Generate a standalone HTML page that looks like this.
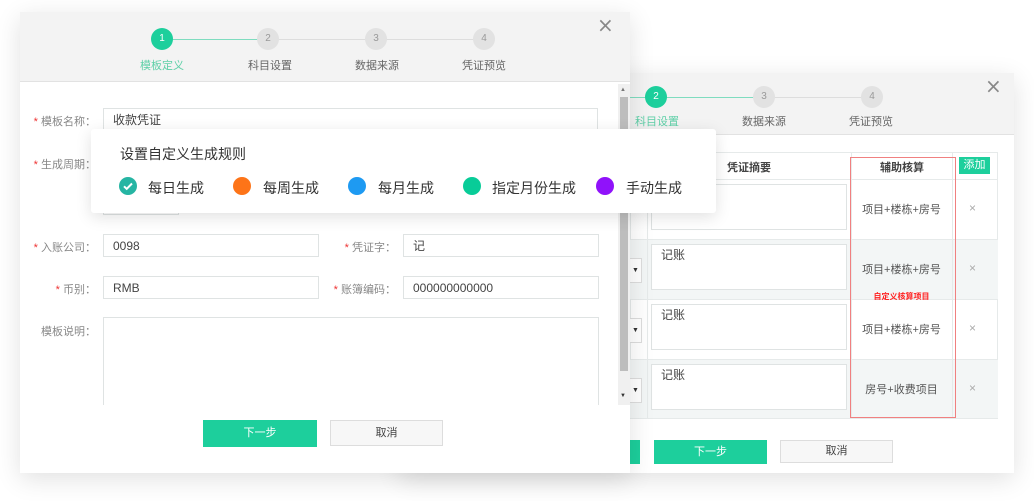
<!DOCTYPE html>
<html><head><meta charset="utf-8"><style>
*{box-sizing:border-box;margin:0;padding:0}
body{width:1034px;height:501px;background:#fff;position:relative;overflow:hidden;font-family:"Liberation Sans","Noto Sans CJK SC",sans-serif;color:#555;font-size:12px}
.abs{position:absolute}
.dlg{position:absolute;background:#fff;box-shadow:0 6px 24px rgba(0,0,0,.12)}
.hdr{position:absolute;left:0;right:0;top:0;background:#f3f3f3;border-bottom:1px solid #e2e2e2}
.c{position:absolute;width:22px;height:22px;border-radius:50%;background:#e2e2e2;color:#999;font-size:10px;text-align:center;line-height:22px}
.c.on{background:#1dcf9c;color:#fff}
.ln{position:absolute;height:1px;background:#ddd}
.sl{position:absolute;font-size:11px;color:#666;transform:translateX(-50%);white-space:nowrap}
.inp{position:absolute;border:1px solid #dfe3e3;background:#fff;font-size:12px;color:#444;padding-left:9px;line-height:22px}
.lbl{position:absolute;font-size:11px;color:#888;text-align:right;white-space:nowrap}
.lbl b{color:#e33;font-weight:normal}
.btn{position:absolute;text-align:center;font-size:11px}
.x{position:absolute;font-size:20px;color:#888;font-family:"DejaVu Sans",sans-serif}
.dot{position:absolute;width:18px;height:18px;border-radius:50%}
.op{position:absolute;font-size:14px;color:#333;top:178px}
</style></head><body>

<div class="dlg" style="left:400px;top:73px;width:614px;height:400px">
  <div class="hdr" style="height:62px"></div>
</div>
<div class="ln" style="left:630px;top:97px;width:126px;background:#7fdcbf"></div>
<div class="ln" style="left:766px;top:97px;width:98px"></div>
<div class="c on" style="left:645px;top:86px">2</div>
<div class="c" style="left:753px;top:86px">3</div>
<div class="c" style="left:861px;top:86px">4</div>
<div class="sl" style="left:657px;top:113px;color:#5fd0a8">科目设置</div>
<div class="sl" style="left:764px;top:113px">数据来源</div>
<div class="sl" style="left:871px;top:113px">凭证预览</div>
<div class="x" style="left:985px;top:74px">×</div>

<div class="abs" style="left:630px;top:152px;width:368px;height:267px;border:1px solid #e6eaea;background:#fff"></div>
<div class="abs" style="left:630px;top:239px;width:368px;height:60px;background:#f3f6f6"></div>
<div class="abs" style="left:630px;top:359px;width:368px;height:59px;background:#f3f6f6"></div>
<div class="abs" style="left:630px;top:179px;width:368px;height:1px;background:#e6eaea"></div>
<div class="abs" style="left:630px;top:239px;width:368px;height:1px;background:#e6eaea"></div>
<div class="abs" style="left:630px;top:299px;width:368px;height:1px;background:#e6eaea"></div>
<div class="abs" style="left:630px;top:359px;width:368px;height:1px;background:#e6eaea"></div>
<div class="abs" style="left:647px;top:152px;width:1px;height:267px;background:#e6eaea"></div>
<div class="abs" style="left:851px;top:152px;width:1px;height:267px;background:#e6eaea"></div>
<div class="abs" style="left:952px;top:152px;width:1px;height:267px;background:#e6eaea"></div>
<div class="abs" style="left:727px;top:159px;font-size:11px;color:#444;font-weight:bold">凭证摘要</div>
<div class="abs" style="left:880px;top:159px;font-size:11px;color:#444;font-weight:bold">辅助核算</div>
<div class="abs" style="left:959px;top:157px;width:31px;height:17px;background:#1dcf9c;color:#fff;font-size:11px;text-align:center;line-height:17px">添加</div>
<div class="inp" style="left:651px;top:184px;width:196px;height:46px"></div>
<div class="inp" style="left:651px;top:244px;width:196px;height:46px;line-height:20px">记账</div>
<div class="inp" style="left:651px;top:304px;width:196px;height:46px;line-height:20px">记账</div>
<div class="inp" style="left:651px;top:364px;width:196px;height:46px;line-height:20px">记账</div>
<div class="abs" style="left:630px;top:258px;width:12px;height:25px;border:1px solid #ddd;border-left:none;background:#fff;font-size:7px;color:#333;line-height:24px;text-align:center">▼</div>
<div class="abs" style="left:630px;top:318px;width:12px;height:25px;border:1px solid #ddd;border-left:none;background:#fff;font-size:7px;color:#333;line-height:24px;text-align:center">▼</div>
<div class="abs" style="left:630px;top:378px;width:12px;height:25px;border:1px solid #ddd;border-left:none;background:#fff;font-size:7px;color:#333;line-height:24px;text-align:center">▼</div>
<div class="abs" style="left:851px;top:201px;width:101px;text-align:center;font-size:11px;color:#555">项目+楼栋+房号</div>
<div class="abs" style="left:851px;top:261px;width:101px;text-align:center;font-size:11px;color:#555">项目+楼栋+房号</div>
<div class="abs" style="left:851px;top:321px;width:101px;text-align:center;font-size:11px;color:#555">项目+楼栋+房号</div>
<div class="abs" style="left:851px;top:381px;width:101px;text-align:center;font-size:11px;color:#555">房号+收费项目</div>
<div class="abs" style="left:851px;top:291px;width:101px;text-align:center;font-size:8px;color:#f22;font-weight:bold">自定义核算项目</div>
<div class="abs" style="left:969px;top:201px;color:#aaa;font-size:12px">×</div>
<div class="abs" style="left:969px;top:261px;color:#aaa;font-size:12px">×</div>
<div class="abs" style="left:969px;top:321px;color:#aaa;font-size:12px">×</div>
<div class="abs" style="left:969px;top:381px;color:#aaa;font-size:12px">×</div>
<div class="abs" style="left:850px;top:157px;width:106px;height:261px;border:1px solid #f08080"></div>
<div class="btn" style="left:630px;top:440px;width:10px;height:24px;background:#1dcf9c"></div>
<div class="btn" style="left:654px;top:440px;width:113px;height:24px;background:#1dcf9c;color:#fff;line-height:24px">下一步</div>
<div class="btn" style="left:780px;top:440px;width:113px;height:23px;background:#f7f7f7;border:1px solid #ddd;color:#444;line-height:21px">取消</div>

<div class="dlg" style="left:20px;top:12px;width:610px;height:461px">
  <div class="hdr" style="height:70px"></div>
</div>
<div class="ln" style="left:170px;top:39px;width:92px;background:#7fdcbf"></div>
<div class="ln" style="left:276px;top:39px;width:200px"></div>
<div class="c on" style="left:151px;top:28px">1</div>
<div class="c" style="left:257px;top:28px">2</div>
<div class="c" style="left:365px;top:28px">3</div>
<div class="c" style="left:473px;top:28px">4</div>
<div class="sl" style="left:162px;top:57px;color:#5fd0a8">模板定义</div>
<div class="sl" style="left:270px;top:57px">科目设置</div>
<div class="sl" style="left:377px;top:57px">数据来源</div>
<div class="sl" style="left:484px;top:57px">凭证预览</div>
<div class="x" style="left:597px;top:13px">×</div>

<div class="lbl" style="left:20px;width:76px;top:113px"><b>*</b> 模板名称：</div>
<div class="inp" style="left:103px;top:108px;width:495px;height:23px">收款凭证</div>
<div class="lbl" style="left:20px;width:76px;top:156px"><b>*</b> 生成周期：</div>
<div class="inp" style="left:103px;top:195px;width:76px;height:20px"></div>
<div class="lbl" style="left:20px;width:76px;top:239px"><b>*</b> 入账公司：</div>
<div class="inp" style="left:103px;top:234px;width:216px;height:23px">0098</div>
<div class="lbl" style="left:300px;width:96px;top:239px"><b>*</b> 凭证字：</div>
<div class="inp" style="left:403px;top:234px;width:196px;height:23px">记</div>
<div class="lbl" style="left:20px;width:76px;top:281px"><b>*</b> 币别：</div>
<div class="inp" style="left:103px;top:276px;width:216px;height:23px">RMB</div>
<div class="lbl" style="left:300px;width:96px;top:281px"><b>*</b> 账簿编码：</div>
<div class="inp" style="left:403px;top:276px;width:196px;height:23px">000000000000</div>
<div class="lbl" style="left:20px;width:76px;top:323px">模板说明：</div>
<div class="abs" style="left:103px;top:317px;width:496px;height:88px;border:1px solid #dfe3e3;border-bottom:none"></div>
<div class="abs" style="left:618px;top:84px;width:12px;height:321px;background:#f0f0f0"></div>
<div class="abs" style="left:620px;top:97px;width:8px;height:274px;background:#bdbdbd"></div>
<div class="abs" style="left:620px;top:87px;font-size:6px;color:#777">▲</div>
<div class="abs" style="left:620px;top:393px;font-size:6px;color:#333">▼</div>
<div class="btn" style="left:203px;top:420px;width:114px;height:27px;background:#1dcf9c;color:#fff;line-height:27px">下一步</div>
<div class="btn" style="left:330px;top:420px;width:113px;height:26px;background:#f7f7f7;border:1px solid #ddd;color:#444;line-height:24px">取消</div>

<div class="abs" style="left:91px;top:129px;width:625px;height:84px;background:#fff;box-shadow:0 4px 16px rgba(0,0,0,.12);border-radius:3px"></div>
<div class="abs" style="left:120px;top:144px;font-size:14px;color:#333">设置自定义生成规则</div>
<div class="dot" style="left:119px;top:177px;background:#26b5a3"><svg width="18" height="18" viewBox="0 0 18 18"><path d="M5 9.3l2.7 2.6L13 6.5" stroke="#fff" stroke-width="2" fill="none"/></svg></div>
<div class="op" style="left:148px">每日生成</div>
<div class="dot" style="left:233px;top:177px;background:#fd7418"></div>
<div class="op" style="left:263px">每周生成</div>
<div class="dot" style="left:348px;top:177px;background:#1e9af2"></div>
<div class="op" style="left:378px">每月生成</div>
<div class="dot" style="left:463px;top:177px;background:#08cc98"></div>
<div class="op" style="left:492px">指定月份生成</div>
<div class="dot" style="left:596px;top:177px;background:#9012fa"></div>
<div class="op" style="left:626px">手动生成</div>
</body></html>
